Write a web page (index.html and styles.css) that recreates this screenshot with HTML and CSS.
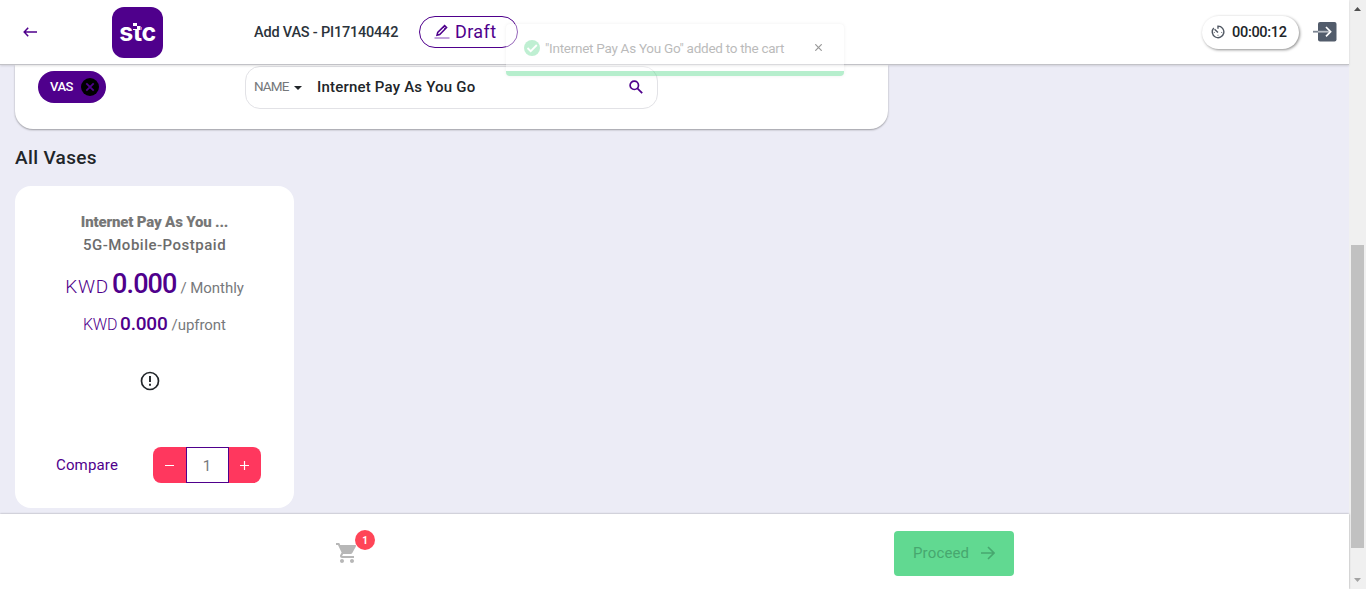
FILE: index.html
```html
<!DOCTYPE html>
<html lang="en">
<head>
<meta charset="utf-8">
<title>Add VAS</title>
<link rel="stylesheet" href="styles.css">
</head>
<body>
<div class="page">
  <header class="header">
    <svg class="back" width="14" height="10" viewBox="0 0 14 10"><path d="M5.2 .8 1.2 5l4 4.2M1.2 5H14" fill="none" stroke="#4f008c" stroke-width="1.5"/></svg>
    <div class="logo"><span class="logo-text">stc</span><svg class="logo-dots" width="9" height="7" viewBox="0 0 9 7"><path d="M0 0h9v7H0z" fill="#4f008c"/><path d="M1 0h4v3H1zM5 3h3.500v4H5zM1 6h4v1H1z" fill="#fff"/></svg></div>
    <div class="title">Add VAS - PI17140442</div>
    <div class="status">
      <svg width="16" height="16" viewBox="0 0 16 16"><path d="M3 11.2 3.7 8.500 10.600 1.600 12.600 3.600 5.700 10.500z" fill="none" stroke="#4f008c" stroke-width="1.500"/><path d="M9.200 3 11.200 5" stroke="#4f008c"/><path d="M.5 13h15v2H.5z" fill="#c2a3dc"/></svg>
      <span class="status-label">Draft</span>
    </div>
    <div class="timer">
      <svg width="14" height="14" viewBox="0 0 15 15" fill="none" stroke="#505762" stroke-width="1.500"><path d="M7.500 4V1.200A6.200 6.200 0 1 1 3 3.200M7.500 8 3.800 4.500"/><path d="M3 8h1M7 11h1M11 8h1" stroke-width="1"/></svg>
      <span class="timer-value">00:00:12</span>
    </div>
    <svg class="exit" width="24" height="20" viewBox="0 0 24 20"><rect x="5" y="0" width="18.500" height="19.500" rx="2" fill="#525c6b"/><path d="M0 9.700h5" stroke="#7c8592" stroke-width="1.800"/><path d="M5 9.700h11" stroke="#b9bec5" stroke-width="1.800"/><path d="m13 5 4.600 4.700-4.600 4.700" fill="none" stroke="#fff" stroke-width="1.700"/></svg>
  </header>

  <main class="content">
    <section class="filters">
      <div class="chip"><span class="chip-label">VAS</span><svg width="18" height="18" viewBox="0 0 18 18"><circle cx="9" cy="9" r="9"/><path d="m5.300 5.300 7.400 7.400m0-7.400-7.400 7.400" stroke="#4f008c" stroke-width="1.800"/></svg></div>
      <div class="search">
        <span class="search-type">NAME</span>
        <svg class="caret" width="8" height="4" viewBox="0 0 8 4"><path d="M0 0h8L4 4z" fill="#212529"/></svg>
        <span class="search-value">Internet Pay As You Go</span>
        <svg class="magnifier" width="14" height="14" viewBox="0 0 14 14" fill="none" stroke="#4f008c" stroke-width="1.700"><circle cx="5.300" cy="5.300" r="4.200"/><path d="m8.400 8.400 4.800 4.800"/></svg>
      </div>
    </section>
    <h2 class="heading">All Vases</h2>
    <article class="card">
      <div class="card-name">Internet Pay As You ...</div>
      <div class="card-type">5G-Mobile-Postpaid</div>
      <div class="price monthly"><span class="currency">KWD</span><span class="amount">0.000</span><span class="period">/ Monthly</span></div>
      <div class="price upfront"><span class="currency">KWD</span><span class="amount">0.000</span><span class="period">/upfront</span></div>
      <svg class="info" width="20" height="20" viewBox="0 0 20 20"><circle cx="10" cy="10" r="8.500" fill="none" stroke="#212529" stroke-width="1.700"/><path d="M10 5v6M10 12.800v2" stroke="#212529" stroke-width="1.900"/></svg>
      <div class="actions">
        <span class="compare">Compare</span>
        <div class="stepper">
          <span class="step"><svg width="9" height="9" viewBox="0 0 9 9"><path d="M0 4.500h9" stroke="#fff" stroke-width="1.200"/></svg></span>
          <span class="quantity">1</span>
          <span class="step"><svg width="9" height="9" viewBox="0 0 9 9"><path d="M0 4.500h9M4.500 0v9" stroke="#fff" stroke-width="1.200"/></svg></span>
        </div>
      </div>
    </article>
  </main>

  <footer class="footer">
    <div class="cart">
      <svg width="22" height="22" viewBox="1 2 22 20"><path fill="#b7b7b7" d="M7 18c-1.100 0-1.990.9-1.990 2S5.900 22 7 22s2-.9 2-2-.9-2-2-2zM1 2v2h2l3.600 7.590-1.350 2.450c-.16.280-.25.610-.25.960 0 1.100.9 2 2 2h12v-2H7.420c-.14 0-.25-.11-.25-.25l.03-.12.900-1.630h7.450c.75 0 1.410-.41 1.750-1.030l3.580-6.490A1 1 0 0 0 20 4H5.210l-.94-2H1zm16 16c-1.100 0-1.990.9-1.990 2s.89 2 1.990 2 2-.9 2-2-.9-2-2-2z"/></svg>
      <span class="badge">1</span>
    </div>
    <div class="proceed"><span class="proceed-label">Proceed</span><svg width="14" height="14" viewBox="0 0 14 14" fill="none" stroke="#47a76f" stroke-width="1.600"><path d="M0 7h13M7 1l6 6-6 6"/></svg></div>
  </footer>
</div>
<div class="scrollbar">
  <svg width="7" height="4" viewBox="0 0 7 4"><path d="M0 4h7L3.500 0z" fill="#505050"/></svg>
  <div class="thumb"></div>
  <svg width="7" height="4" viewBox="0 0 7 4"><path d="M0 0h7L3.500 4z" fill="#a3a3a3"/></svg>
</div>
<div class="toast">
  <svg width="16" height="16" viewBox="0 0 16 16"><circle cx="8" cy="8" r="8" fill="#61d991"/><path d="m3.500 8 3.200 3.200L12.800 5" fill="none" stroke="#fff" stroke-width="1.800"/></svg>
  <span class="toast-text">"Internet Pay As You Go" added to the cart</span>
  <svg class="toast-close" width="7" height="7" viewBox="0 0 7 7"><path d="m.3.3 6.400 6.400m0-6.400L.3 6.700" stroke="#000" stroke-width="1.200"/></svg>
</div>
</body>
</html>
```
FILE: styles.css
```css
* { box-sizing: border-box; }
body { margin: 0; height: 589px; display: flex; overflow: hidden; position: relative; font-family: Roboto, "Liberation Sans", sans-serif; color: #212529; }
svg { display: block; flex: none; }
span, .title, .card-name, .card-type { white-space: nowrap; }
.page { width: 1349px; height: 589px; display: flex; flex-direction: column; background: #ececf6; }
.header { height: 65px; flex: none; background: #fff; border-bottom: 1px solid #c2c2c7; box-shadow: 0 1px 2px rgba(0,0,0,.12); display: flex; align-items: center; padding: 0 12px 0 23px; z-index: 1; }
.logo { width: 51px; height: 51px; margin-left: 75px; border-radius: 12px; background: #4f008c; display: flex; align-items: center; justify-content: center; position: relative; }
.logo-text { color: #fff; font: 700 25px/30px Inter, sans-serif; letter-spacing: -.4px; padding-bottom: 1px; }
.logo-dots { position: absolute; left: 20px; top: 16px; }
.title { width: 145px; margin-left: 91px; padding-top: 1px; font-size: 14.5px; letter-spacing: -.2px; font-weight: 500; color: #2b333b; }
.status { width: 99px; height: 32px; margin-left: 20px; border: 1px solid #4f008c; border-radius: 16px; display: flex; align-items: center; padding-left: 14px; gap: 5px; color: #4f008c; font-size: 18px; letter-spacing: .4px; }
.status-label { line-height: 30px; padding-bottom: 1px; }
.timer { width: 97px; height: 33px; margin-left: auto; border-radius: 17px; box-shadow: 1px 1px 3px rgba(0,0,0,.45); display: flex; align-items: center; padding-left: 9px; gap: 7px; font-size: 14.5px; letter-spacing: -.3px; font-weight: 500; }
.exit { margin-left: 14px; }
.content { flex: 1; min-height: 0; padding-left: 15px; }
.filters { width: 873px; height: 64px; background: #fff; border-radius: 0 0 18px 18px; box-shadow: 0 1px 2px rgba(0,0,0,.35); display: flex; align-items: flex-start; padding-left: 23px; }
.chip { width: 68px; height: 32px; margin-top: 6px; border-radius: 16px; background: #4f008c; color: #fff; display: flex; align-items: center; padding-left: 12px; gap: 7px; font-size: 13px; letter-spacing: -.5px; font-weight: 500; }
.chip-label { width: 24px; padding-bottom: 1px; }
.search { width: 413px; height: 43px; margin: 1px 0 0 139px; border: 1px solid #e2e2e6; border-radius: 15px; display: flex; align-items: center; padding: 0 14px 2px 8px; }
.search-type { width: 36px; color: #75787b; font-size: 13.5px; letter-spacing: -.9px; padding-bottom: 2px; }
.caret { margin-left: 4px; margin-top: 3px; }
.search-value { margin-left: 15px; font-size: 15px; letter-spacing: .2px; font-weight: 500; }
.magnifier { margin-left: auto; }
.heading { margin: 18px 0; height: 21px; font-size: 19px; letter-spacing: .35px; line-height: 21px; font-weight: 500; }
.card { width: 279px; height: 322px; background: #fff; border-radius: 16px; display: flex; flex-direction: column; align-items: center; padding-top: 25px; color: #6c6c6c; }
.card-name { font-size: 15px; letter-spacing: -.18px; line-height: 22px; font-weight: 900; color: #777; }
.card-type { font-size: 15px; letter-spacing: .5px; line-height: 23px; font-weight: 500; margin-top: 1px; }
.price { display: flex; align-items: baseline; }
.currency, .amount { color: #4f008c; }
.currency { font-weight: 300; }
.amount { font-weight: 500; }
.monthly { height: 32px; line-height: 32px; margin-top: 11px; }
.monthly .currency { font-size: 19px; letter-spacing: .8px; }
.monthly .amount { font-size: 27px; letter-spacing: -.9px; margin-left: 3px; }
.period { font-size: 15px; letter-spacing: -.05px; margin-left: 4px; color: #77797c; }
.upfront { height: 24px; line-height: 24px; margin-top: 12px; }
.upfront .currency { font-size: 16px; letter-spacing: -.3px; }
.upfront .amount { font-size: 19px; letter-spacing: -.2px; margin-left: 3px; }
.info { margin: 35px 9px 0 0; }
.actions { width: 100%; height: 36px; display: flex; align-items: center; margin-top: 56px; padding-left: 41px; }
.compare { width: 62px; color: #4f008c; font-size: 15px; letter-spacing: .15px; }
.stepper { width: 108px; height: 36px; margin-left: 35px; border-radius: 8px; overflow: hidden; background: #ff375e; display: flex; }
.step { flex: 1; display: flex; align-items: center; justify-content: center; }
.quantity { width: 43px; background: #fff; border: 1px solid #4f008c; color: #77797c; font-size: 15px; line-height: 36px; text-align: center; }
.footer { height: 75px; flex: none; background: #fff; box-shadow: 0 0 2px rgba(0,0,0,.35); display: flex; align-items: center; padding-top: 3px; padding-left: 336px; z-index: 1; }
.cart { position: relative; width: 41px; }
.badge { position: absolute; left: 19px; top: -12px; width: 20px; height: 20px; border-radius: 50%; background: #ff4557; color: #fff; font-size: 10px; line-height: 21px; font-weight: 700; text-align: center; }
.proceed { width: 120px; height: 45px; margin: 0 0 0 517px; border-radius: 4px; background: #61d991; color: #47a76f; display: flex; align-items: center; padding-left: 19px; font-size: 15px; letter-spacing: .15px; }
.proceed-label { width: 56px; margin-right: 12px; }
.scrollbar { width: 17px; height: 589px; background: #f0f0f0; display: flex; flex-direction: column; align-items: center; padding: 7px 0; }
.thumb { width: 13px; height: 303px; margin: 234px 0 30px; background: #c1c1c1; }
.toast { position: absolute; z-index: 2; left: 506px; top: 24px; width: 338px; height: 52px; opacity: .4; background: #fff; border-bottom: 5px solid #4bd683; border-radius: 4px; box-shadow: 0 0 3px rgba(0,0,0,.15); display: flex; align-items: center; padding-left: 18px; font-size: 13.5px; letter-spacing: -.27px; color: #555; }
.toast-text { width: 240px; margin-left: 5px; }
.toast-close { margin-left: 30px; }
```
